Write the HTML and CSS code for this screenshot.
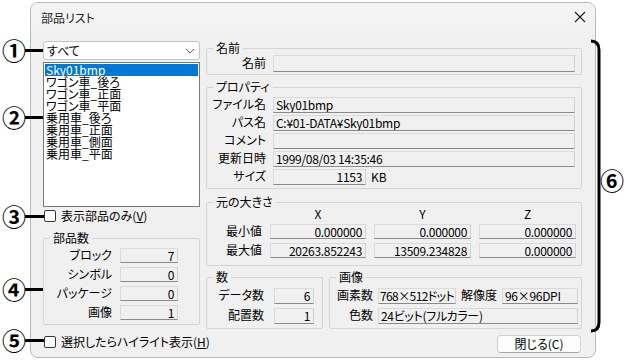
FILE: index.html
```html
<!DOCTYPE html>
<html lang="ja">
<head>
    <meta charset="UTF-8">
    <title>部品リスト</title>
    <link rel="stylesheet" href="styles.css">
</head>
<body>

    <div class="dialog">
        <div class="titlebar">
            <span class="title">部品リスト</span>
            <svg class="close" width="12" height="12" viewBox="0 0 12 12"><path d="M1 1 L11 11 M11 1 L1 11" stroke="#1b1b1b" stroke-width="1.1" fill="none"/></svg>
        </div>

        <div class="dlg-body">
            <!-- left: part list -->
            <div class="left-col">
                <div class="combo">
                    <span>すべて</span>
                    <svg width="10" height="6" viewBox="0 0 10 6"><path d="M1 1 L5 5 L9 1" stroke="#606060" fill="none"/></svg>
                </div>
                <ul class="listbox">
                    <li class="sel">Sky01bmp</li>
                    <li>ワゴン車_後ろ</li>
                    <li>ワゴン車_正面</li>
                    <li>ワゴン車_平面</li>
                    <li>乗用車_後ろ</li>
                    <li>乗用車_正面</li>
                    <li>乗用車_側面</li>
                    <li>乗用車_平面</li>
                </ul>
                <label class="check check-view"><span class="box"></span><span>表示部品のみ(<u>V</u>)</span></label>

                <fieldset class="group parts">
                    <legend>部品数</legend>
                    <div class="parts-grid">
                        <span class="lbl">ブロック</span><span class="field num">7</span>
                        <span class="lbl">シンボル</span><span class="field num">0</span>
                        <span class="lbl">パッケージ</span><span class="field num">0</span>
                        <span class="lbl">画像</span><span class="field num">1</span>
                    </div>
                </fieldset>

                <label class="check check-hl"><span class="box"></span><span>選択したらハイライト表示(<u>H</u>)</span></label>
            </div>

            <!-- right: details -->
            <div class="right-col">
                <fieldset class="group name-group">
                    <legend>名前</legend>
                    <div class="prop-grid">
                        <span class="lbl">名前</span><span class="field"></span>
                    </div>
                </fieldset>

                <fieldset class="group prop-group">
                    <legend>プロパティ</legend>
                    <div class="prop-grid">
                        <span class="lbl">ファイル名</span><span class="field">Sky01bmp</span>
                        <span class="lbl">パス名</span><span class="field">C:¥01-DATA¥Sky01bmp</span>
                        <span class="lbl">コメント</span><span class="field"></span>
                        <span class="lbl">更新日時</span><span class="field">1999/08/03 14:35:46</span>
                        <span class="lbl">サイズ</span>
                        <span class="size-cell"><span class="field num size">1153</span><span class="unit">KB</span></span>
                    </div>
                </fieldset>

                <fieldset class="group bounds-group">
                    <legend>元の大きさ</legend>
                    <div class="bounds-grid">
                        <span></span><span class="head">X</span><span class="head">Y</span><span class="head">Z</span>
                        <span class="lbl">最小値</span>
                        <span class="field num">0.000000</span>
                        <span class="field num">0.000000</span>
                        <span class="field num">0.000000</span>
                        <span class="lbl">最大値</span>
                        <span class="field num">20263.852243</span>
                        <span class="field num">13509.234828</span>
                        <span class="field num">0.000000</span>
                    </div>
                </fieldset>

                <div class="bottom-groups">
                    <fieldset class="group count-group">
                        <legend>数</legend>
                        <div class="count-grid">
                            <span class="lbl">データ数</span><span class="field num">6</span>
                            <span class="lbl">配置数</span><span class="field num">1</span>
                        </div>
                    </fieldset>
                    <fieldset class="group image-group">
                        <legend>画像</legend>
                        <div class="image-grid">
                            <span class="lbl">画素数</span><span class="field tight">768×512ドット</span>
                            <span class="lbl">解像度</span><span class="field">96×96DPI</span>
                            <span class="lbl">色数</span><span class="field wide">24ビット(フルカラー)</span>
                        </div>
                    </fieldset>
                </div>

                <div class="btn-row">
                    <button class="btn">閉じる(C)</button>
                </div>
            </div>
        </div>
    </div>

    <!-- callout marks -->
    <div class="callout c1"><span class="mark">①</span><span class="line"></span></div>
    <div class="callout c2"><span class="mark">②</span><span class="line"></span></div>
    <div class="callout c3"><span class="mark">③</span><span class="line"></span></div>
    <div class="callout c4"><span class="mark">④</span><span class="line"></span></div>
    <div class="callout c5"><span class="mark">⑤</span><span class="line"></span></div>
    <svg class="bracket" width="16" height="298" viewBox="0 0 16 298"><path d="M3 4 Q11 4 11 13 V285 Q11 294 3 294" stroke="#000" stroke-width="3" fill="none"/></svg>
    <div class="callout c6"><span class="mark">⑥</span></div>

</body>
</html>
```

FILE: styles.css
```css
body {
    margin: 0;
    background-color: #fff;
    font-family: "Noto Sans CJK JP", "Noto Sans", sans-serif;
    font-size: 12px;
    font-feature-settings: "palt";
    color: #000;
}

.dialog {
    width: 566px;
    height: 356px;
    margin: 2px 0 0 30px;
    box-sizing: border-box;
    border: 1px solid #b9b9b9;
    border-radius: 8px;
    background-color: #f0f0f0;
    overflow: hidden;
}

.titlebar {
    height: 28px;
    display: flex;
    align-items: center;
    justify-content: space-between;
    padding: 0 9px 0 10px;
    background-color: #f3f3f3;
}

.title {
    font-size: 12px;
    color: #1b1b1b;
}

.dlg-body {
    display: flex;
    gap: 6px;
    padding: 10px 0 0 12px;
}

.left-col {
    width: 157px;
    display: flex;
    flex-direction: column;
}

.right-col {
    width: 376px;
    display: flex;
    flex-direction: column;
}

/* combo + list */
.combo {
    height: 19px;
    box-sizing: border-box;
    border: 1px solid #c4c4c4;
    border-radius: 3px;
    background-color: #fff;
    display: flex;
    align-items: center;
    justify-content: space-between;
    padding: 0 4px 0 3px;
    line-height: 17px;
}

.listbox {
    list-style: none;
    margin: 2px 0 0 0;
    padding: 1px;
    height: 145px;
    box-sizing: border-box;
    border: 1px solid #7a7a7a;
    background-color: #fff;
    overflow: hidden;
}

.listbox li {
    height: 12px;
    line-height: 12px;
    padding-left: 1px;
    white-space: nowrap;
}

.listbox li.sel {
    background-color: #0078d7;
    color: #fff;
}

/* check boxes */
.check {
    display: flex;
    align-items: center;
    gap: 5px;
    height: 12px;
    line-height: 12px;
    padding-left: 1px;
    white-space: nowrap;
}

.check .box {
    flex: none;
    width: 10px;
    height: 10px;
    border: 1px solid #333;
    border-radius: 2px;
    background-color: #fff;
}

.check-view {
    margin-top: 3px;
}

.check-hl {
    margin-top: 11px;
}

/* group boxes */
.group {
    margin: 0;
    padding: 0;
    min-width: 0;
    border: 1px solid #d5d5d5;
    border-radius: 2px;
}

.group legend {
    margin-left: 6px;
    padding: 0 3px;
    line-height: 14px;
    height: 14px;
}

.lbl {
    text-align: right;
    white-space: nowrap;
}

.field {
    box-sizing: border-box;
    border: 1px solid;
    border-color: #dadada #d2d2d2 #8a8a8a #dadada;
    background-color: #f0f0f0;
    padding: 0 2px;
    white-space: nowrap;
    overflow: hidden;
    letter-spacing: -0.3px;
}

.field.num {
    text-align: right;
    padding-right: 3px;
}

.field.tight {
    padding: 0 1px;
    letter-spacing: -0.6px;
}

/* 部品数 */
.parts {
    margin-top: 9px;
    padding: 3px 0 4px 0;
}

.parts-grid {
    display: grid;
    grid-template-columns: 68px 58px;
    column-gap: 8px;
    row-gap: 4px;
}

.parts-grid > span {
    height: 15px;
    line-height: 13px;
}

/* 名前 / プロパティ */
.name-group {
    padding: 0 6px 2px 0;
}

.prop-group {
    margin-top: 5px;
    padding: 3px 6px 3px 0;
}

.prop-grid {
    display: grid;
    grid-template-columns: 59px 1fr;
    column-gap: 7px;
    row-gap: 2px;
}

.prop-grid > span {
    height: 16px;
    line-height: 14px;
}

.name-group .prop-grid > span {
    height: 17px;
    line-height: 15px;
}

.size-cell {
    display: flex;
    align-items: center;
}

.size-cell .field.size {
    width: 93px;
    height: 16px;
    line-height: 14px;
}

.size-cell .unit {
    margin-left: 5px;
}

/* 元の大きさ */
.bounds-group {
    margin-top: 6px;
    padding: 0 5px 7px 0;
}

.bounds-grid {
    display: grid;
    grid-template-columns: 55px 96px 97px 97px;
    grid-template-rows: 13px 15px 15px;
    column-gap: 8px;
    row-gap: 4px;
    margin-top: -2px;
}

.bounds-grid > span {
    line-height: 13px;
}

.bounds-grid .head {
    text-align: center;
}

/* 数 / 画像 */
.bottom-groups {
    display: flex;
    gap: 6px;
    margin-top: 4px;
}

.count-group {
    width: 117px;
    box-sizing: border-box;
    padding: 4px 0 4px 0;
}

.image-group {
    flex: 1;
    padding: 4px 3px 4px 0;
}

.count-grid {
    display: grid;
    grid-template-columns: 57px 40px;
    column-gap: 10px;
    row-gap: 4px;
}

.image-grid {
    display: grid;
    grid-template-columns: 43px 78px 36px 1fr;
    column-gap: 5px;
    row-gap: 4px;
}

.count-grid > span,
.image-grid > span {
    height: 16px;
    line-height: 14px;
}

.image-grid .wide {
    grid-column: 2 / -1;
}

/* button */
.btn-row {
    display: flex;
    justify-content: flex-end;
    margin-top: 6px;
    padding-right: 1px;
}

.btn {
    width: 84px;
    height: 18px;
    padding: 0;
    font-family: "Noto Sans CJK JP", sans-serif;
    font-size: 12px;
    font-feature-settings: "palt";
    line-height: 16px;
    color: #000;
    background-color: #fdfdfd;
    border: 1px solid #d0d0d0;
    border-bottom-color: #a8a8a8;
    border-radius: 4px;
}

/* callouts (annotation layer) */
.callout {
    position: absolute;
    display: flex;
    align-items: center;
    height: 24px;
}

.callout .mark {
    font-size: 24px;
    line-height: 24px;
    font-weight: 700;
    width: 23px;
    text-align: center;
    font-feature-settings: normal;
}

.callout .line {
    height: 3px;
    background-color: #000;
}

.c1 { left: 2px; top: 38px; }
.c1 .line { width: 18px; }
.c2 { left: 2px; top: 105px; }
.c2 .line { width: 18px; }
.c3 { left: 2px; top: 204px; }
.c3 .line { width: 19px; }
.c4 { left: 2px; top: 277px; }
.c4 .line { width: 18px; }
.c5 { left: 2px; top: 328px; }
.c5 .line { width: 19px; }
.c6 { left: 600px; top: 168px; }

.bracket {
    position: absolute;
    left: 588px;
    top: 37px;
}
```
